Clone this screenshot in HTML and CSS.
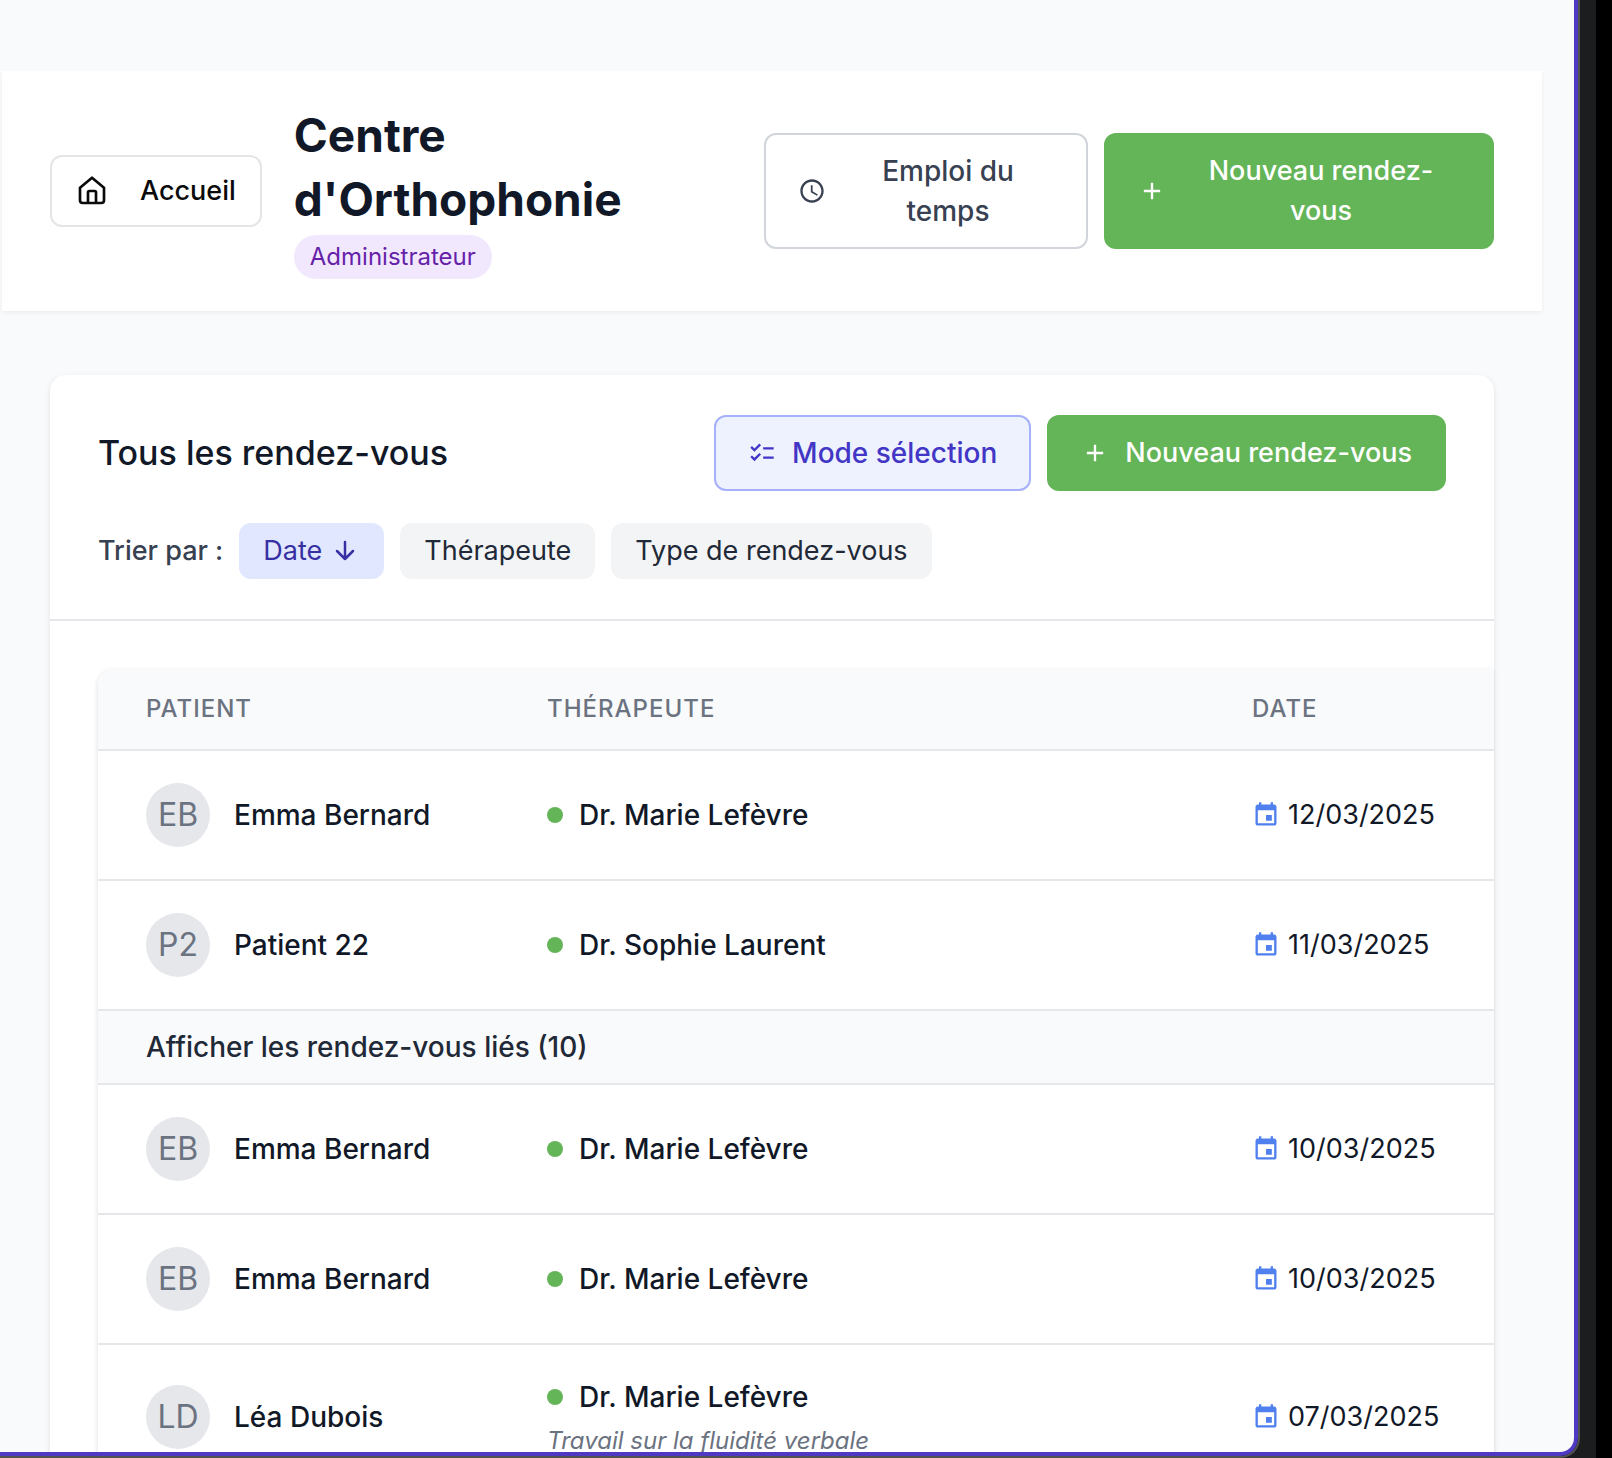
FILE: index.html
```html
<!DOCTYPE html>
<html lang="fr">
<head>
<meta charset="utf-8">
<meta name="viewport" content="width=device-width, initial-scale=1">
<title>Centre d'Orthophonie</title>
<link rel="stylesheet" href="styles.css">
</head>
<body>
<svg class="sprite" aria-hidden="true">
  <symbol id="home" viewBox="0 0 24 24"><path d="M3 9.500 12 2l9 7.500V19a2 2 0 0 1-2 2H5a2 2 0 0 1-2-2ZM9 21v-8a1 1 0 0 1 1-1h4a1 1 0 0 1 1 1v8" fill="none" stroke="currentColor" stroke-width="2" stroke-linejoin="round"/></symbol>
  <symbol id="clock" viewBox="0 0 24 24"><path fill="currentColor" d="M11.990 2C6.470 2 2 6.480 2 12s4.470 10 9.990 10C17.520 22 22 17.520 22 12S17.520 2 11.990 2zM12 20c-4.420 0-8-3.580-8-8s3.580-8 8-8 8 3.580 8 8-3.580 8-8 8zm.5-13H11v6l5.250 3.150.75-1.230-4.500-2.670z"/></symbol>
  <symbol id="plus" viewBox="0 0 24 24"><path fill="currentColor" d="M19 13h-6v6h-2v-6H5v-2h6V5h2v6h6v2z"/></symbol>
  <symbol id="checks" viewBox="0 0 24 24"><path fill="currentColor" d="M22 7h-9v2h9V7zm0 8h-9v2h9v-2zM5.540 11 2 7.460l1.410-1.410 2.120 2.120 4.240-4.240 1.410 1.410L5.540 11zm0 8L2 15.460l1.410-1.410 2.120 2.120 4.240-4.240 1.410 1.410L5.540 19z"/></symbol>
  <symbol id="calendar" viewBox="0 0 24 24"><path fill="currentColor" d="M17 12h-5v5h5v-5zM16 1v2H8V1H6v2H5c-1.110 0-1.990.9-1.990 2L3 19c0 1.100.89 2 2 2h14c1.100 0 2-.9 2-2V5c0-1.100-.9-2-2-2h-1V1h-2zm3 18H5V8h14v11z"/></symbol>
  <symbol id="down" viewBox="0 0 24 24"><path d="M12 3v17M4 12l8 8 8-8" fill="none" stroke="currentColor" stroke-width="2.500" stroke-linecap="round" stroke-linejoin="round"/></symbol>
</svg>
<div class="desktop">
<div class="window">
<div class="app">
  <header class="topbar">
    <button class="btn-home" type="button"><svg class="icon-home"><use href="#home"/></svg>Accueil</button>
    <div class="brand">
      <h1>Centre d'Orthophonie</h1>
      <span class="badge">Administrateur</span>
    </div>
    <div class="topbar-actions">
      <button class="btn btn-outline btn-schedule" type="button"><svg class="icon"><use href="#clock"/></svg><span class="label">Emploi du temps</span></button>
      <button class="btn btn-primary btn-new" type="button"><svg class="icon"><use href="#plus"/></svg><span class="label">Nouveau rendez-vous</span></button>
    </div>
  </header>
  <main class="card">
    <div class="card-head">
      <div class="title-row">
        <h2>Tous les rendez-vous</h2>
        <button class="btn btn-select" type="button"><svg class="icon"><use href="#checks"/></svg>Mode sélection</button>
        <button class="btn btn-primary" type="button"><svg class="icon"><use href="#plus"/></svg>Nouveau rendez-vous</button>
      </div>
      <div class="sort-row">
        <span class="sort-label">Trier par :</span>
        <button class="chip chip-active" type="button">Date <svg class="arrow"><use href="#down"/></svg></button>
        <button class="chip" type="button">Thérapeute</button>
        <button class="chip" type="button">Type de rendez-vous</button>
      </div>
    </div>
    <div class="table-area">
      <table>
        <colgroup><col class="col-patient"><col class="col-therapist"><col></colgroup>
        <thead><tr><th scope="col">Patient</th><th scope="col">Thérapeute</th><th scope="col">Date</th></tr></thead>
        <tbody>
          <tr>
            <td><div class="patient"><span class="avatar">EB</span>Emma Bernard</div></td>
            <td><div class="therapist"><span class="dot"></span>Dr. Marie Lefèvre</div></td>
            <td><div class="date"><svg class="icon"><use href="#calendar"/></svg>12/03/2025</div></td>
          </tr>
          <tr>
            <td><div class="patient"><span class="avatar">P2</span>Patient 22</div></td>
            <td><div class="therapist"><span class="dot"></span>Dr. Sophie Laurent</div></td>
            <td><div class="date"><svg class="icon"><use href="#calendar"/></svg>11/03/2025</div></td>
          </tr>
          <tr class="linked"><td colspan="3"><button class="link-toggle" type="button">Afficher les rendez-vous liés (10)</button></td></tr>
          <tr>
            <td><div class="patient"><span class="avatar">EB</span>Emma Bernard</div></td>
            <td><div class="therapist"><span class="dot"></span>Dr. Marie Lefèvre</div></td>
            <td><div class="date"><svg class="icon"><use href="#calendar"/></svg>10/03/2025</div></td>
          </tr>
          <tr>
            <td><div class="patient"><span class="avatar">EB</span>Emma Bernard</div></td>
            <td><div class="therapist"><span class="dot"></span>Dr. Marie Lefèvre</div></td>
            <td><div class="date"><svg class="icon"><use href="#calendar"/></svg>10/03/2025</div></td>
          </tr>
          <tr>
            <td><div class="patient"><span class="avatar">LD</span>Léa Dubois</div></td>
            <td><div class="therapist"><span class="dot"></span>Dr. Marie Lefèvre</div><div class="note">Travail sur la fluidité verbale</div></td>
            <td><div class="date"><svg class="icon"><use href="#calendar"/></svg>07/03/2025</div></td>
          </tr>
        </tbody>
      </table>
    </div>
  </main>
</div>
</div>
</div>
</body>
</html>
```
FILE: styles.css
```css
* { box-sizing: border-box; }

body {
  margin: 0;
  height: 100vh;
  overflow: hidden;
  padding-right: 16px;
  background: #000;
  font-family: Inter, "Liberation Sans", sans-serif;
  font-size: 28px;
  line-height: 40px;
  color: #111827;
}

h1, h2 { margin: 0; }

button {
  font: inherit;
  color: inherit;
  margin: 0;
  cursor: pointer;
}

.sprite { display: none; }

.desktop {
  height: 100%;
  padding-right: 16px;
  background: #1c1d1e;
}

.window {
  height: 100%;
  border: solid #525250;
  border-width: 0 2px 2px 0;
  border-bottom-right-radius: 20px;
  overflow: hidden;
}

.app {
  height: 100%;
  overflow: hidden;
  padding: 71px 32px 0 2px;
  border: solid #4f39c3;
  border-width: 0 4px 4px 0;
  border-bottom-right-radius: 18px;
  background: #f9fafc;
}

.topbar {
  display: flex;
  align-items: center;
  padding: 32px 48px;
  background: #fff;
  box-shadow: 0 2px 4px rgba(0, 0, 0, 0.06);
}

.btn-home {
  display: flex;
  align-items: center;
  gap: 32px;
  padding: 14px 24px;
  border: 2px solid #e5e5e5;
  border-radius: 12px;
  background: #fff;
  color: #0a0a0a;
  font-size: 27px;
  font-weight: 500;
}

.icon-home { width: 32px; height: 32px; }

.brand {
  flex: 1;
  margin-left: 32px;
}

.brand h1 {
  max-width: 400px;
  font-size: 46px;
  line-height: 64px;
  font-weight: 700;
}

.badge {
  display: block;
  width: fit-content;
  margin-top: 4px;
  padding: 6px 16px;
  border-radius: 22px;
  background: #f2e8fe;
  color: #6522a9;
  font-size: 24px;
  line-height: 32px;
}

.topbar-actions { display: flex; gap: 16px; }

.btn {
  display: flex;
  align-items: center;
  gap: 16px;
  padding: 16px 32px;
  border: 2px solid transparent;
  border-radius: 12px;
  font-weight: 500;
}

.icon { width: 28px; height: 28px; flex: none; }
.label { flex: 1; }

.btn-outline { background: #fff; border-color: #d1d5db; color: #374151; }
.btn-primary { background: #64b458; border-color: #64b458; color: #fff; font-size: 27px; }
.btn-select { background: #eef1fe; border-color: #a5b1fa; color: #4236c6; }
.btn-schedule { width: 324px; }
.btn-new { width: 390px; }

.card {
  margin: 64px 48px 0;
  border-radius: 16px;
  background: #fff;
  box-shadow: 0 2px 6px rgba(0, 0, 0, 0.1);
}

.card-head {
  padding: 40px 48px;
  border-bottom: 2px solid #e5e7eb;
}

.title-row { display: flex; align-items: center; gap: 16px; }

.title-row h2 {
  flex: 1;
  font-size: 34px;
  line-height: 56px;
  font-weight: 500;
}

.sort-row {
  display: flex;
  align-items: center;
  gap: 16px;
  margin-top: 32px;
  font-size: 27px;
}

.sort-label { color: #374151; font-weight: 500; }

.chip {
  display: flex;
  align-items: center;
  gap: 8px;
  padding: 8px 24px;
  border: 0;
  border-radius: 12px;
  background: #f3f4f6;
  color: #1f2937;
}

.chip-active { background: #e0e7ff; color: #3730a3; }
.arrow { width: 30px; height: 24px; }

.table-area { padding: 48px 0 48px 48px; }

table {
  width: 100%;
  table-layout: fixed;
  border-collapse: separate;
  border-spacing: 0;
  border-top-left-radius: 16px;
  box-shadow: -1px 1px 4px rgba(0, 0, 0, 0.1);
}

.col-patient { width: 401px; }
.col-therapist { width: 705px; }

th {
  padding: 24px 48px;
  border-bottom: 2px solid #e5e7eb;
  background: #f9fafb;
  color: #6b7280;
  font-size: 24px;
  line-height: 32px;
  font-weight: 500;
  letter-spacing: 1px;
  text-align: left;
  text-transform: uppercase;
}

th:first-child { border-top-left-radius: 16px; }

td {
  padding: 32px 48px;
  border-bottom: 2px solid #e5e7eb;
  white-space: nowrap;
}

.patient { display: flex; align-items: center; gap: 24px; font-weight: 500; }

.avatar {
  width: 64px;
  border-radius: 50%;
  background: #e5e7eb;
  color: #6b7280;
  font-size: 32px;
  line-height: 64px;
  font-weight: 400;
  text-align: center;
}

.therapist { display: flex; align-items: center; gap: 16px; font-weight: 500; }

.dot {
  width: 16px;
  height: 16px;
  border-radius: 50%;
  background: #64b458;
}

.note {
  margin-top: 8px;
  color: #6b7280;
  font-size: 24px;
  line-height: 32px;
  font-style: italic;
}

td:last-child { padding-right: 0; }
.date { display: flex; align-items: center; gap: 8px; font-size: 27px; }
.date .icon { color: #4f80ee; }

.linked td { padding: 16px 48px; background: #f9fafb; }

.link-toggle {
  display: block;
  padding: 0;
  border: 0;
  background: none;
  color: #1f2937;
  font-weight: 500;
}
```
